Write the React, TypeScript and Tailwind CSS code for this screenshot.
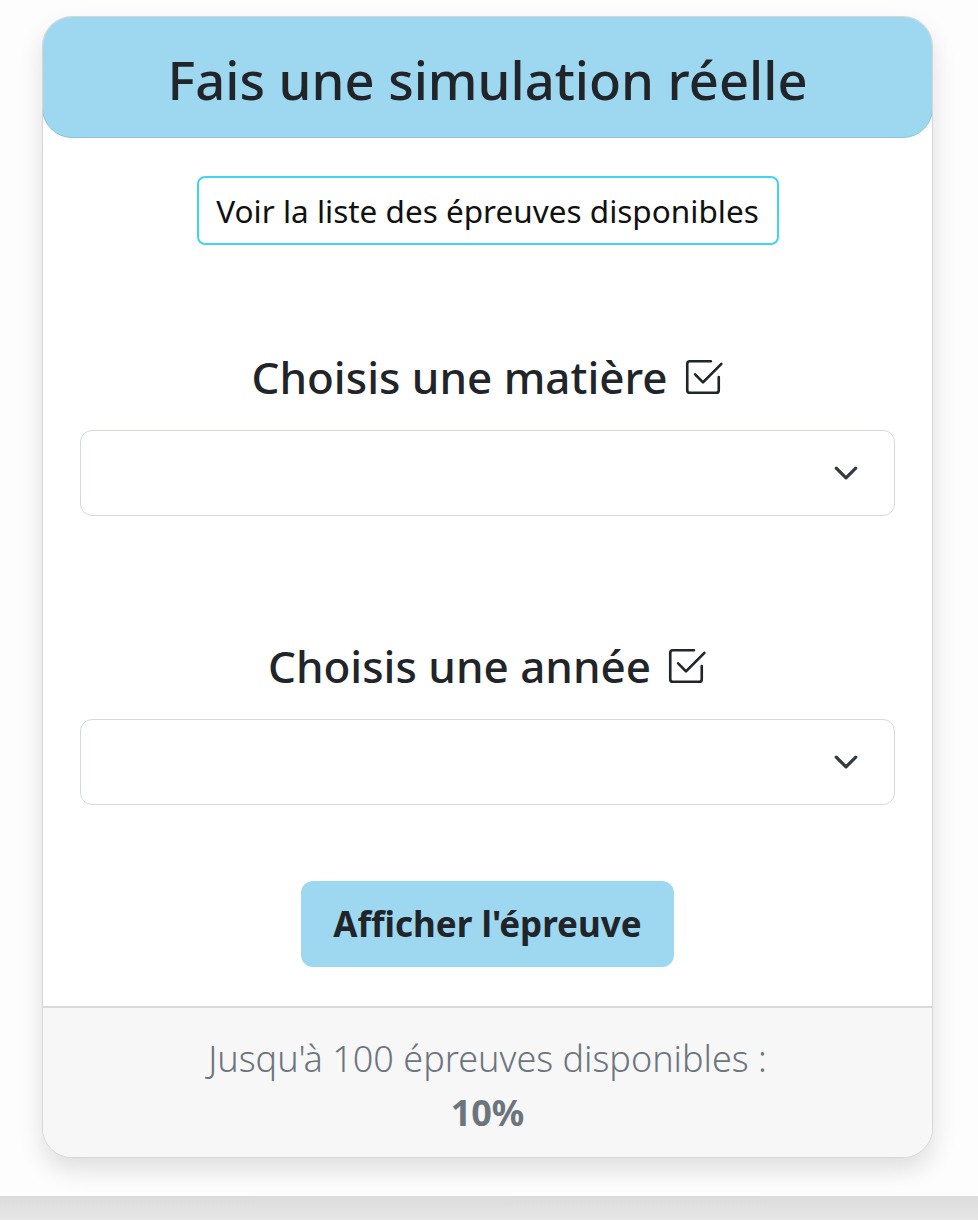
import React from 'react'
import { BsCheck2Square } from 'react-icons/bs'

function Chevron() {
  return (
    <svg width="26" height="26" viewBox="0 0 16 16" fill="none" className="text-[#343a40]">
      <path d="m2 5 6 6 6-6" stroke="currentColor" strokeWidth="2" strokeLinecap="round" strokeLinejoin="round" />
    </svg>
  )
}

function Field({ label }: { label: string }) {
  return (
    <div className="flex flex-col items-stretch">
      <h2 className="flex items-center justify-center gap-[14px] text-[44px] leading-[48px] font-medium text-[#212529]">
        <span>{label}</span>
        <BsCheck2Square className="w-[42px] h-[42px]" />
      </h2>
      <div className="mt-[29px] h-[86px] rounded-[12px] border border-[#d5d9de] bg-white flex items-center justify-end pr-[35px]">
        <Chevron />
      </div>
    </div>
  )
}

export default function App() {
  return (
    <div className="w-[978px] h-[1220px] flex flex-col bg-[#fdfdfd] overflow-hidden" style={{ fontFamily: '"Noto Sans", "Open Sans", sans-serif' }}>
      <div className="h-[1196px] pt-[16px] px-[42px]">
        {/* Card */}
        <div className="w-[891px] rounded-[30px] border border-[#d6d6d6] bg-white shadow-[0_12px_24px_rgba(0,0,0,0.12)] overflow-hidden">
          <div className="h-[122px] -m-px pt-[5px] rounded-[30px] bg-[#9dd8f0] border border-[#8cc3da] flex items-center justify-center">
            <h1 className="text-[52.5px] leading-[60px] font-medium text-[#212529]">Fais une simulation réelle</h1>
          </div>

          <div className="px-[37px] pt-[39px] pb-[39px] flex flex-col">
            <div className="flex justify-center">
              <button className="h-[69px] w-[582px] rounded-[8px] border-2 border-[#3dd5f3] bg-white text-[31.5px] leading-[40px] text-[#111]">
                Voir la liste des épreuves disponibles
              </button>
            </div>

            <div className="mt-[108px]">
              <Field label="Choisis une matière" />
            </div>
            <div className="mt-[126px]">
              <Field label="Choisis une année" />
            </div>

            <div className="mt-[76px] flex justify-center">
              <button className="h-[86px] w-[373px] rounded-[12px] bg-[#9dd8f0] text-[35px] leading-[44px] font-bold text-[#212529]">
                Afficher l'épreuve
              </button>
            </div>
          </div>

          {/* Footer */}
          <div className="border-t-2 border-[#d9d9d9] bg-[#f7f7f7] h-[151px] flex flex-col items-center pt-[29px] text-[#6c757d]">
            <p className="text-[36px] leading-[44px] font-light">Jusqu'à 100 épreuves disponibles :</p>
            <p className="text-[36px] leading-[64px] font-bold">10%</p>
          </div>
        </div>
      </div>
      <div className="flex-1 bg-gradient-to-b from-[#dcdcdc] to-[#e6e6e6]" />
    </div>
  )
}
